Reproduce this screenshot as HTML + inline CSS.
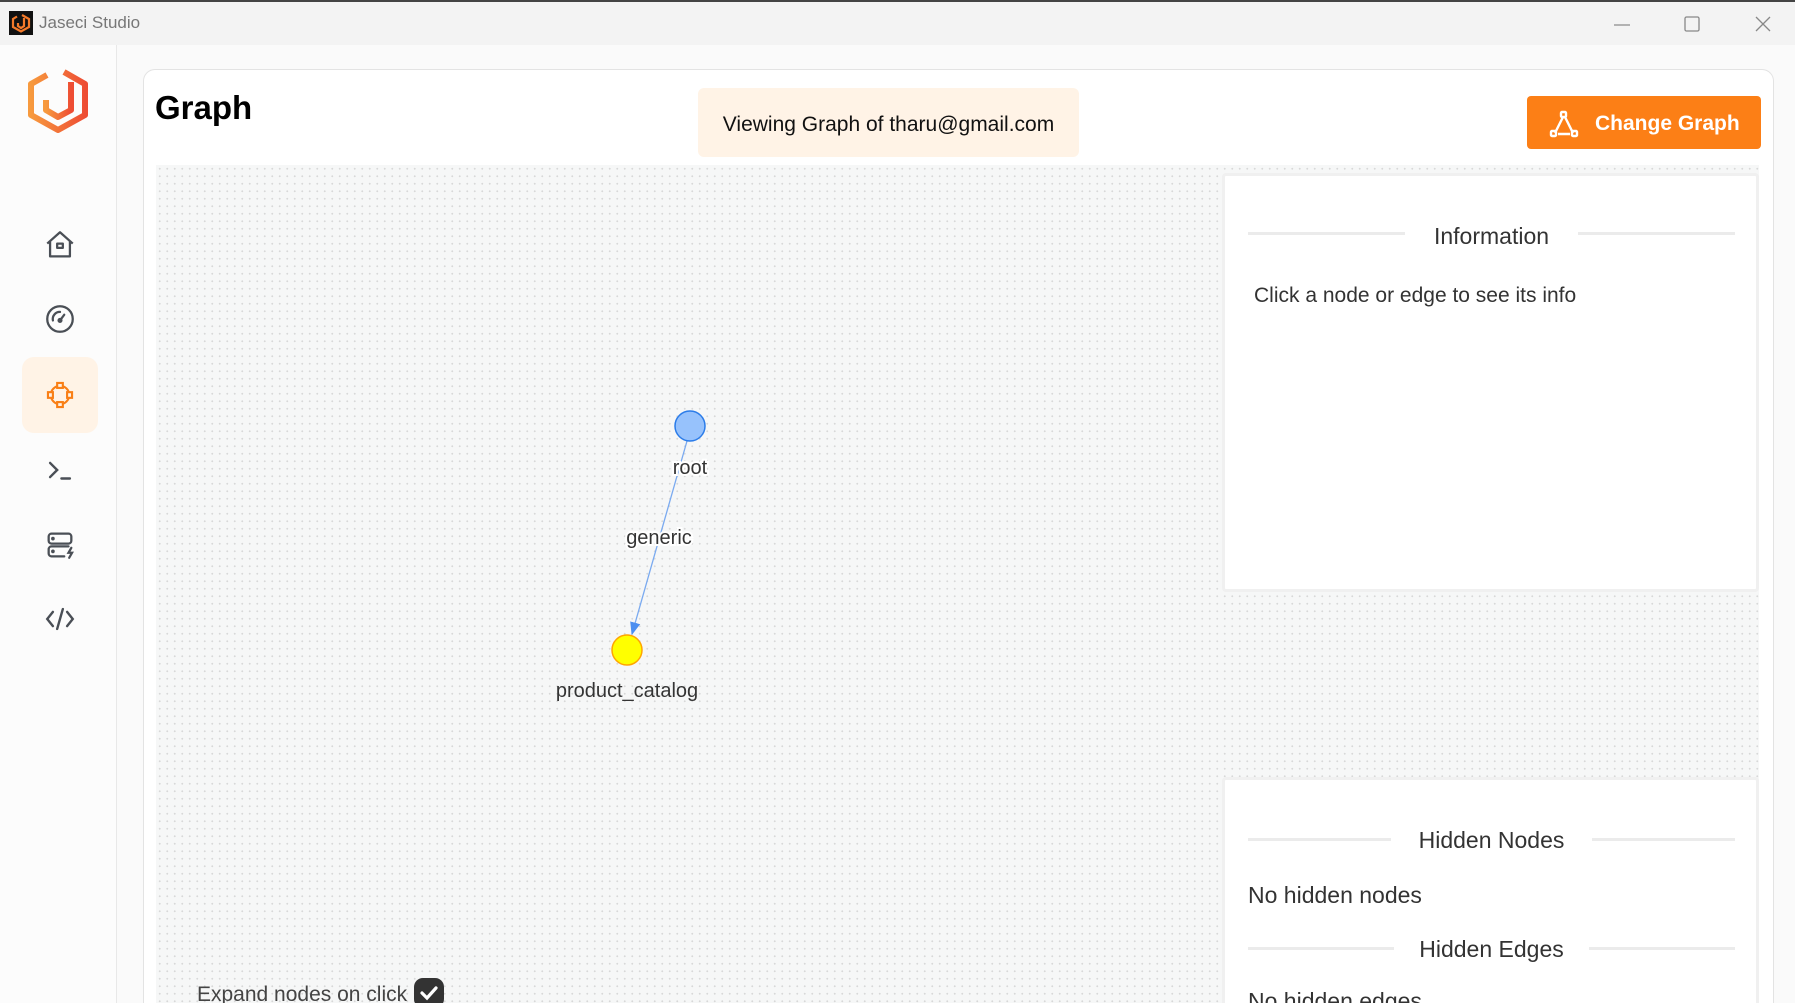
<!DOCTYPE html>
<html><head><meta charset="utf-8"><style>
*{margin:0;padding:0;box-sizing:border-box}
html,body{width:1795px;height:1003px;overflow:hidden}
body{background:#fafafa;font-family:"Liberation Sans",sans-serif;position:relative;color:#222}
.abs{position:absolute}
.tb{left:0;top:0;width:1795px;height:45px;background:#f3f3f3;border-top:2px solid #444}
.side{left:0;top:45px;width:117px;height:958px;background:#fcfcfc;border-right:1px solid #e8e8e8}
.card{left:143px;top:69px;width:1631px;height:934px;background:#fff;border:1px solid #e3e3e3;border-bottom:none;border-radius:12px 12px 0 0}
.canvas{left:156px;top:165px;width:1603px;height:838px;background-color:#f6f7f7;background-image:radial-gradient(#d8d8d8 0.9px,transparent 1.1px);background-size:7.5px 7.5px}
.panel{background:#fff;border:3px solid #f0f0f0;border-radius:4px}
.hd{font-size:23px;color:#333;text-align:center}
.line{height:3px;background:#ebebeb}
.ic{left:43px;width:34px;height:34px}
</style></head><body>
<div class="abs tb">
  <svg class="abs" style="left:9px;top:9px" width="24" height="24" viewBox="0 0 24 24"><rect width="24" height="24" fill="#111"/><path d="M13 4 L20 8 V16 L12 20.5 L4 16 V8 L8 5.5" fill="none" stroke="#f47a2a" stroke-width="2.2"/><path d="M15 7 V15 L12 17 L9 15 V12" fill="none" stroke="#f47a2a" stroke-width="2.2"/></svg>
  <div class="abs" style="left:39px;top:11px;font-size:17px;color:#777">Jaseci Studio</div>
  <svg class="abs" style="left:1614px;top:15px" width="18" height="14"><line x1="0" y1="8" x2="16" y2="8" stroke="#888" stroke-width="1.2"/></svg>
  <svg class="abs" style="left:1684px;top:14px" width="16" height="16"><rect x="1" y="1" width="14" height="14" rx="1.5" fill="none" stroke="#888" stroke-width="1.3"/></svg>
  <svg class="abs" style="left:1755px;top:14px" width="16" height="16"><path d="M1 1L15 15M15 1L1 15" stroke="#888" stroke-width="1.3"/></svg>
</div>
<div class="abs side"></div>
<svg class="abs" style="left:27px;top:66px" width="62" height="67" viewBox="0 0 62 67"><defs><linearGradient id="g" x1="0" x2="1"><stop offset="0" stop-color="#f79a3e"/><stop offset="1" stop-color="#ee4d34"/></linearGradient></defs><path d="M37 6 L58 18 V49 L31 64 L4 49 V18 L20 9" fill="none" stroke="url(#g)" stroke-width="6" stroke-linejoin="round"/><path d="M44 16 V44 L31 51 L19 44 V34" fill="none" stroke="url(#g)" stroke-width="6" stroke-linejoin="round"/></svg>
<div class="abs" style="left:22px;top:357px;width:76px;height:76px;background:#fff3e6;border-radius:12px"></div>
<svg class="abs ic" style="top:228px" viewBox="0 0 24 24" fill="none" stroke="#4a4f56" stroke-width="1.6" stroke-linejoin="round"><path d="M3 11 L12 3 L21 11 M5 9.5 V20 H19 V9.5"/><rect x="10" y="11" width="4" height="3"/></svg>
<svg class="abs ic" style="top:302px" viewBox="0 0 24 24" fill="none" stroke="#4a4f56" stroke-width="1.6" stroke-linecap="round"><circle cx="12" cy="12" r="9"/><path d="M7 13 A5 5 0 0 1 12 7 M12 13 L15 9"/><circle cx="12" cy="13" r="1" fill="#4a4f56"/></svg>
<svg class="abs ic" style="top:378px" viewBox="0 0 24 24" fill="none" stroke="#f97f16" stroke-width="1.5"><circle cx="12" cy="12" r="6.5"/><rect x="10" y="3.5" width="4" height="3.5" fill="#fff3e6"/><rect x="10" y="17" width="4" height="3.5" fill="#fff3e6"/><rect x="3.5" y="10" width="3.5" height="4" fill="#fff3e6"/><rect x="17" y="10" width="3.5" height="4" fill="#fff3e6"/></svg>
<svg class="abs ic" style="top:453px" viewBox="0 0 24 24" fill="none" stroke="#4a4f56" stroke-width="1.7" stroke-linecap="round"><path d="M5 7 L10 12 L5 17 M13 18 H19"/></svg>
<svg class="abs ic" style="top:528px" viewBox="0 0 24 24" fill="none" stroke="#4a4f56" stroke-width="1.6" stroke-linecap="round"><rect x="4" y="4" width="16" height="7" rx="2"/><path d="M18 13 H6 A2 2 0 0 0 4 15 V18 A2 2 0 0 0 6 20 H15"/><path d="M20 14 L18 17.5 H20.5 L18.5 21"/><circle cx="7" cy="7.5" r=".5" fill="#4a4f56"/><circle cx="7" cy="16.5" r=".5" fill="#4a4f56"/></svg>
<svg class="abs ic" style="top:602px" viewBox="0 0 24 24" fill="none" stroke="#4a4f56" stroke-width="1.7" stroke-linecap="round"><path d="M7 7 L3 12 L7 17 M17 7 L21 12 L17 17 M14 5 L10 19"/></svg>

<div class="abs card"></div>
<div class="abs" style="left:155px;top:89px;font-size:33px;font-weight:bold;color:#000">Graph</div>
<div class="abs" style="left:698px;top:88px;width:381px;height:69px;background:#fff3e6;border-radius:6px;font-size:21px;color:#111;text-align:center;line-height:73px">Viewing Graph of tharu@gmail.com</div>
<div class="abs" style="left:1527px;top:96px;width:234px;height:53px;background:#fc7f16;border-radius:4px;color:#fff;font-size:21px;font-weight:bold;line-height:56px;padding-left:68px">Change Graph</div>
<svg class="abs" style="left:1548px;top:108px" width="32" height="32" viewBox="0 0 32 32" fill="none" stroke="#fff" stroke-width="2.4"><path d="M15 9 L7 25 M17 9 L25 25 M10 26 H22"/><rect x="13" y="4" width="5" height="5" rx="1"/><rect x="3" y="23" width="5" height="5" rx="1"/><rect x="24" y="23" width="5" height="5" rx="1"/></svg>

<div class="abs canvas"></div>
<svg class="abs" style="left:0;top:0" width="1795" height="1003">
  <defs><marker id="a" markerWidth="10" markerHeight="10" refX="9" refY="5" orient="auto"><path d="M0 1 L10 5 L0 9z" fill="#4c8ff0"/></marker></defs>
  <line x1="687" y1="441" x2="632" y2="634" stroke="#7aaaf0" stroke-width="1.3" marker-end="url(#a)"/>
  <circle cx="690" cy="426" r="15" fill="#97c2fc" stroke="#2b7ce9" stroke-width="1.5"/>
  <circle cx="627" cy="650" r="15" fill="#ffff00" stroke="#ffa500" stroke-width="1.5"/>
  <g font-family="Liberation Sans,sans-serif" font-size="20" fill="#343434" text-anchor="middle">
    <text x="690" y="474" stroke="#fff" stroke-width="4" paint-order="stroke">root</text>
    <text x="659" y="544" stroke="#fff" stroke-width="4" paint-order="stroke">generic</text>
    <text x="627" y="697">product_catalog</text>
  </g>
</svg>

<div class="abs panel" style="left:1222px;top:173px;width:537px;height:419px"></div>
<div class="abs line" style="left:1248px;top:232px;width:157px"></div>
<div class="abs line" style="left:1578px;top:232px;width:157px"></div>
<div class="abs hd" style="left:1405px;top:223px;width:173px">Information</div>
<div class="abs" style="left:1254px;top:284px;font-size:21px;color:#333">Click a node or edge to see its info</div>

<div class="abs panel" style="left:1222px;top:777px;width:537px;height:240px"></div>
<div class="abs line" style="left:1248px;top:838px;width:143px"></div>
<div class="abs line" style="left:1592px;top:838px;width:143px"></div>
<div class="abs hd" style="left:1391px;top:827px;width:201px">Hidden Nodes</div>
<div class="abs" style="left:1248px;top:882px;font-size:23px;color:#333">No hidden nodes</div>
<div class="abs line" style="left:1248px;top:947px;width:146px"></div>
<div class="abs line" style="left:1589px;top:947px;width:146px"></div>
<div class="abs hd" style="left:1394px;top:936px;width:195px">Hidden Edges</div>
<div class="abs" style="left:1248px;top:988px;font-size:23px;color:#333">No hidden edges</div>

<div class="abs" style="left:197px;top:983px;font-size:21px;color:#444">Expand nodes on click</div>
<div class="abs" style="left:414px;top:978px;width:30px;height:30px;background:#333;border-radius:9px"></div>
<svg class="abs" style="left:414px;top:978px" width="30" height="30"><path d="M8 15 L13 20 L22 10" fill="none" stroke="#fff" stroke-width="3.2" stroke-linecap="round"/></svg>
</body></html>
